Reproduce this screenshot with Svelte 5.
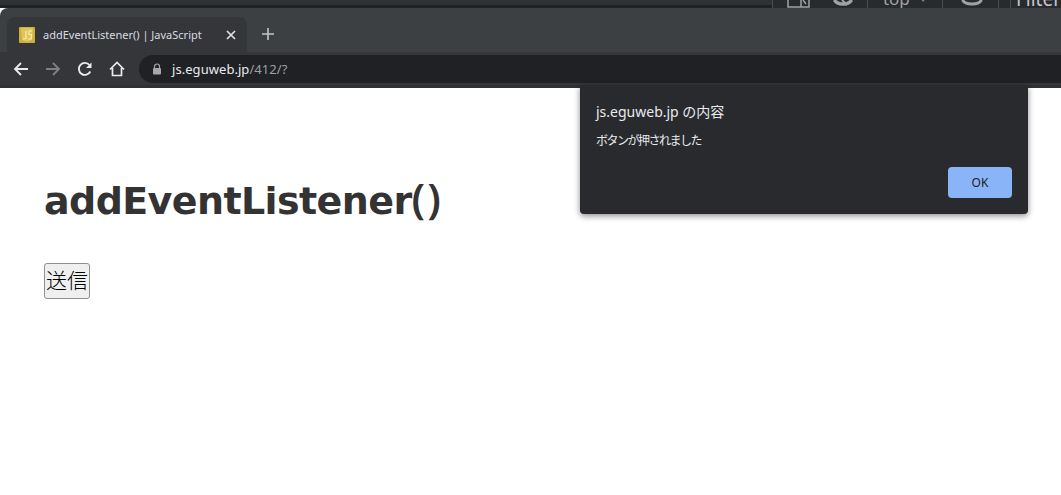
<script lang="ts">
  let title = 'addEventListener() | JavaScript';
  function notify() {}
</script>

<div class="page">
  <div class="devtools">
    <div class="dev-left"></div>
    <div class="dev-tools">
      <span class="dev-item dev-a">
        <svg width="24" height="8" viewBox="0 0 24 8" fill="none" stroke="#a0a2a5" stroke-width="1.500"><path d="M1 0v7h21V0M14 0v7M16 0l3 4"/></svg>
        <svg width="22" height="8" viewBox="0 0 22 8" fill="none" stroke="#a0a2a5" stroke-width="3.500"><path d="M2.500 0a9 6 0 0 0 17 0"/><path d="M10 0l5 5" stroke-width="2"/></svg>
      </span>
      <span class="dev-item dev-c">top <small>▾</small></span>
      <span class="dev-item dev-d">
        <svg width="24" height="8" viewBox="0 0 24 8" fill="none" stroke="#a0a2a5" stroke-width="3"><path d="M3 0a9 4 0 0 0 18 0"/></svg>
      </span>
      <span class="dev-item dev-e"></span>
      <span class="dev-item dev-f">Filter</span>
    </div>
  </div>

  <div class="chrome">
    <div class="tabstrip">
      <div class="tab">
        <svg class="favicon" width="16" height="16" viewBox="0 0 16 16">
          <rect width="16" height="16" rx="1" fill="#cdb03c"/>
          <path d="M2 1h12l-1 12-5 2-5-2z" fill="#e0c654"/>
          <path d="M7 4v7l-1 1H4M13 4H10v3.500h2.500V11l-1 1H9" fill="none" stroke="#f6eeb8" stroke-width="1.200"/>
        </svg>
        <span class="tab-title">{title}</span>
        <svg class="tab-close" width="10" height="10" viewBox="0 0 10 10" stroke="#dfe1e4" stroke-width="1.700"><path d="M1 1l8 8M9 1l-8 8"/></svg>
      </div>
      <svg class="new-tab" width="12" height="12" viewBox="0 0 12 12" stroke="#c4c6c9" stroke-width="1.600"><path d="M6 0v12M0 6h12"/></svg>
    </div>

    <div class="toolbar">
      <svg width="16" height="16" viewBox="0 0 16 16" fill="none" stroke="#e8eaed" stroke-width="1.800"><path d="M15 8H2M8 2L2 8l6 6"/></svg>
      <svg width="16" height="16" viewBox="0 0 16 16" fill="none" stroke="#7d8084" stroke-width="1.800"><path d="M1 8h13M8 2l6 6-6 6"/></svg>
      <svg width="16" height="16" viewBox="0 0 16 16" fill="none" stroke="#e8eaed" stroke-width="1.900"><path d="M13.300 10.500A6 6 0 1 1 12.500 4"/><path d="M14.500 1.500v5.500H9z" fill="#e8eaed" stroke="none"/></svg>
      <svg width="16" height="16" viewBox="0 0 16 16" fill="none" stroke="#e8eaed" stroke-width="1.700"><path d="M1 8.500L8 1.500l7 7M3.500 7v7.500h9V7"/></svg>
      <div class="omnibox">
        <svg width="10" height="12" viewBox="0 0 10 12"><path d="M2.500 5V3.500a2.500 2.500 0 0 1 5 0V5" fill="none" stroke="#a5a7aa" stroke-width="1.200"/><rect x="1" y="5" width="8" height="6.500" rx="1" fill="#a5a7aa"/></svg>
        <span class="url"><span class="host">js.eguweb.jp</span>/412/?</span>
      </div>
    </div>
  </div>

  <main class="content">
    <h1>addEventListener<span class="parens">()</span></h1>
    <button class="send" onclick={notify}>送信</button>
  </main>

  <div class="dialog" role="alertdialog">
    <p class="dialog-title">js.eguweb.jp の内容</p>
    <p class="dialog-msg">ボタンが押されました</p>
    <div class="dialog-actions">
      <button class="ok">OK</button>
    </div>
  </div>
</div>

<style>
  :global(body) {
    margin: 0;
    background: #fff;
    font-family: "Noto Sans", "Noto Sans CJK JP", sans-serif;
  }

  .page {
    position: relative;
    height: 495px;
    overflow: hidden;
    background: #fff;
  }

  .devtools {
    display: flex;
    height: 8px;
    overflow: hidden;
    background: #202124;
  }

  .dev-left {
    width: 774px;
    height: 5px;
    background: #303134;
  }

  .dev-tools {
    flex: 1;
    display: flex;
    background: #292a2d;
    color: #a0a2a5;
    font-size: 17px;
    line-height: 16px;
  }

  .dev-item {
    display: flex;
    height: 8px;
    border-left: 1px solid #4a4c50;
    box-sizing: border-box;
    flex-shrink: 0;
  }

  .dev-a { width: 95px; padding-left: 14px; gap: 21px; }
  .dev-c { width: 75px; padding-left: 15px; gap: 11px; align-items: flex-end; }
  .dev-c small { font-size: 8px; }
  .dev-d { width: 56px; padding-left: 17px; }
  .dev-e { width: 12px; }
  .dev-f { flex: 1; padding-left: 5px; align-items: flex-end; color: #c4c6c9; font-size: 19px; }

  .dev-c, .dev-f { padding-bottom: 1px; }

  .chrome {
    background: #3c4043;
    border-radius: 8px 0 0 0;
  }

  .tabstrip {
    display: flex;
    align-items: flex-end;
    height: 44px;
    padding-left: 7px;
  }

  .tab {
    display: flex;
    align-items: center;
    width: 240px;
    height: 35px;
    box-sizing: border-box;
    padding: 0 10px 0 12px;
    background: #35363a;
    border-radius: 8px 8px 0 0;
  }

  .favicon { flex-shrink: 0; margin-right: 8px; }

  .tab-title {
    flex: 1;
    color: #dadce0;
    font-size: 11px;
    white-space: nowrap;
    overflow: hidden;
  }

  .tab-close { margin-right: 1px; }

  .new-tab { margin: 0 0 12px 15px; }

  .toolbar {
    display: flex;
    align-items: center;
    height: 33px;
    box-sizing: border-box;
    padding-left: 13px;
    gap: 16px;
    background: #35363a;
  }

  .omnibox {
    flex: 1;
    display: flex;
    align-items: center;
    gap: 10px;
    height: 28px;
    margin-left: -2px;
    padding-left: 13px;
    background: #202124;
    border-radius: 14px 0 0 14px;
  }

  .url {
    color: #9aa0a6;
    font-size: 13px;
    letter-spacing: 0.05px;
  }

  .host { color: #e8eaed; }

  .content {
    border-top: 3px solid #2f3033;
    padding: 86px 44px 0;
  }

  h1 {
    margin: 0;
    height: 50px;
    overflow: hidden;
    font-family: "DejaVu Sans", sans-serif;
    font-size: 38px;
    line-height: 55px;
    font-weight: 700;
    letter-spacing: -0.6px;
    color: #333;
  }

  .parens {
    font-family: "Noto Sans", sans-serif;
    font-size: 42px;
    font-weight: 600;
    line-height: 0;
    letter-spacing: 2px;
  }

  .send {
    display: block;
    margin-top: 39px;
    width: 46px;
    height: 36px;
    padding: 0 0 4px;
    box-sizing: border-box;
    border: 1px solid #8f8f8f;
    border-radius: 3px;
    background: #efefef;
    color: #000;
    font-family: "Noto Sans CJK JP", sans-serif;
    font-size: 21px;
    font-weight: 300;
    line-height: 1;
  }

  .dialog {
    position: absolute;
    left: 580px;
    top: 85px;
    width: 448px;
    height: 129px;
    box-sizing: border-box;
    padding: 18px 16px 16px;
    background: #292a2d;
    border-radius: 0 0 4px 4px;
    box-shadow: 0 2px 6px rgba(0, 0, 0, 0.45);
    color: #e8eaed;
  }

  .dialog p { margin: 0; }

  .dialog-title { font-size: 14px; line-height: 18px; }

  .dialog .dialog-msg { margin-top: 11px; font-size: 12px; letter-spacing: -1.500px; line-height: 18px; }

  .dialog-actions {
    display: flex;
    justify-content: flex-end;
    margin-top: 17px;
  }

  .ok {
    width: 64px;
    height: 31px;
    padding: 0;
    border: 0;
    border-radius: 4px;
    background: #8ab4f8;
    color: #202124;
    font-family: inherit;
    font-size: 12px;
  }
</style>
